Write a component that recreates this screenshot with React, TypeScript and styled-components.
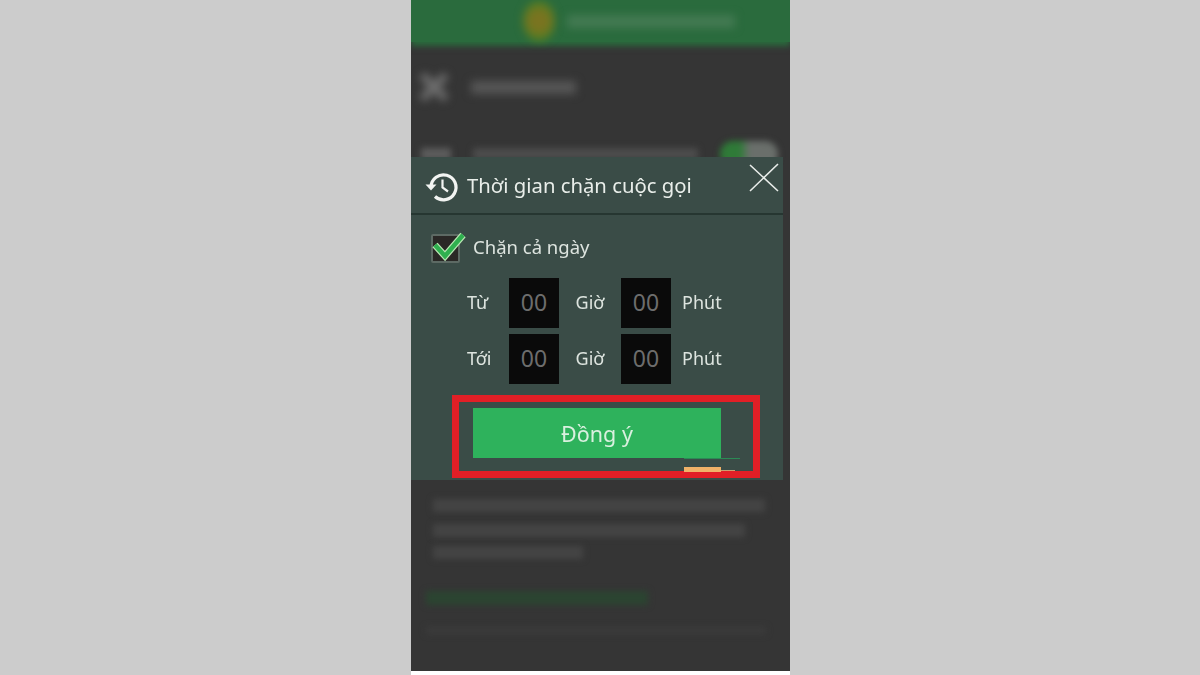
import React from "react";
import styled, { createGlobalStyle } from "styled-components";

const Global = createGlobalStyle`
  html, body { margin: 0; padding: 0; background: #cccccc; }
  body { width: 1200px; height: 675px; overflow: hidden; font-family: "Noto Sans", "Open Sans", sans-serif; }
`;
const Stage = styled.div`
  width: 1200px; height: 675px; display: flex; justify-content: center; padding-left: 1px; box-sizing: border-box;
`;
const Phone = styled.div`
  position: relative; width: 379px; height: 675px; background: #ffffff; overflow: hidden;
  display: flex; flex-direction: column;
`;
const Backdrop = styled.div`
  height: 671px; background: #353535; display: flex; flex-direction: column; overflow: hidden;
`;
const Header = styled.div`
  height: 42px; flex: none; background: #2a6b3d; display: flex; align-items: center; padding-left: 112px; gap: 12px;
  box-shadow: 0 4px 6px 0 #2a6b3d;
`;
const Smudge = styled.div<{ $w: number; $h?: number; $c?: string; $b?: number; $mt?: number; $ml?: number }>`
  width: ${p => p.$w}px; height: ${p => p.$h ?? 10}px; background: ${p => p.$c ?? "#555"}; flex: none;
  margin-top: ${p => p.$mt ?? 0}px; margin-left: ${p => p.$ml ?? 0}px;
  filter: blur(${p => p.$b ?? 3}px);
`;
const Coin = styled.div`
  width: 32px; height: 40px; border-radius: 50%; flex: none; filter: blur(4px);
  background: radial-gradient(circle, #7a7420 0 35%, #4f7f22 75%);
`;
const BackRow = styled.div<{ $top: number; $left?: number }>`
  display: flex; align-items: center; margin-top: ${p => p.$top}px; padding-left: ${p => p.$left ?? 10}px;
`;
const BlurX = styled.svg`
  width: 34px; height: 34px; flex: none; filter: blur(4px);
`;
const Toggle = styled.div`
  width: 58px; height: 26px; border-radius: 14px; margin-left: 22px; flex: none;
  background: linear-gradient(90deg, #2f7a38 0 35%, #6a6f6b 50%); filter: blur(3px);
`;
const BlurLines = styled.div`
  display: flex; flex-direction: column; padding-left: 22px; margin-top: 332px;
`;
const Dialog = styled.div`
  position: absolute; left: 0; top: 157px; width: 372px; height: 323px; background: #3a4c47; color: #e6ece8;
  display: flex; flex-direction: column;
`;
const TitleBar = styled.div`
  position: relative; height: 58px; flex: none; box-sizing: border-box; border-bottom: 2px solid #263631;
  display: flex; align-items: center; padding: 4px 0 0 13px; gap: 7px;
`;
const Title = styled.div`
  font-size: 20.3px; line-height: 28px; padding-bottom: 5px; color: #e9eeea; filter: blur(0.35px); white-space: nowrap;
`;
const Close = styled.svg`
  position: absolute; left: 337px; top: 6px; width: 32px; height: 30px;
`;
const CheckRow = styled.div`
  display: flex; align-items: center; gap: 13px; padding: 17px 0 0 20px; height: 32px;
`;
const CheckBox = styled.div`
  position: relative; width: 29px; height: 29px; box-sizing: border-box; background: #2a2826; border: 2px solid #5d6a64; border-radius: 2px;
`;
const CheckMark = styled.svg`
  position: absolute; left: -2px; top: -2px; width: 36px; height: 30px; overflow: visible;
`;
const CheckLabel = styled.div`
  font-size: 18.5px; line-height: 26px; padding-bottom: 3px; color: #dde4df; filter: blur(0.35px); white-space: nowrap;
`;
const TimeGrid = styled.div`
  display: grid; grid-template-columns: 42px 50px 62px 50px 1fr; row-gap: 6px; padding: 14px 0 0 56px;
  align-items: center;
`;
const TimeLabel = styled.div`
  font-size: 18px; line-height: 24px; padding-bottom: 2px; color: #dde4df; filter: blur(0.35px); text-align: center; white-space: nowrap;
`;
const TimeLeft = styled(TimeLabel)`
  text-align: left;
`;
const UnitLeft = styled(TimeLabel)`
  text-align: left; padding-left: 11px;
`;
const TimeBox = styled.div`
  width: 50px; height: 50px; box-sizing: border-box; padding-bottom: 2px; background: #0a0a0a; color: #6d6d6d; font-size: 23px;
  display: flex; align-items: center; justify-content: center;
`;
const RedFrame = styled.div`
  position: absolute; left: 41px; top: 238px; width: 308px; height: 83px; box-sizing: border-box; border: 7px solid #e11f26;
`;
const ConfirmButton = styled.div`
  position: absolute; left: 14px; top: 6px; width: 248px; height: 50px; background: #2eb25c; color: #d9f0df;
  font-size: 21.5px; display: flex; align-items: center; justify-content: center; filter: blur(0.3px); box-sizing: border-box;
`;
const Artifact = styled.div<{ $l: number; $t: number; $w: number; $h: number; $c: string }>`
  position: absolute; left: ${p => p.$l}px; top: ${p => p.$t}px; width: ${p => p.$w}px; height: ${p => p.$h}px; background: ${p => p.$c};
`;

const Row = ({ l, u, a, b }: { l: string; u: string; a: string; b: string }) => (
  <>
    <TimeLeft>{l}</TimeLeft>
    <TimeBox>{a}</TimeBox>
    <TimeLabel>{u}</TimeLabel>
    <TimeBox>{b}</TimeBox>
    <UnitLeft>Phút</UnitLeft>
  </>
);

export default function App() {
  return (
    <Stage>
      <Global />
      <Phone>
        <Backdrop>
          <Header>
            <Coin />
            <Smudge $w={168} $h={13} $c="#437a52" $b={4} />
          </Header>
          <BackRow $top={28} $left={6}>
            <BlurX viewBox="0 0 34 34" fill="none" stroke="#6e6e6e" strokeWidth="8">
              <path d="M5 5 29 29M29 5 5 29" />
            </BlurX>
            <Smudge $w={105} $h={13} $c="#565656" $b={4} $ml={20} />
          </BackRow>
          <BackRow $top={37}>
            <Smudge $w={30} $h={12} $c="#5c5c5c" />
            <Smudge $w={225} $h={12} $c="#4c4c4c" $ml={22} />
            <Toggle />
          </BackRow>
          <BlurLines>
            <Smudge $w={332} $h={13} $c="#444444" $b={3} />
            <Smudge $w={312} $h={13} $c="#444444" $b={3} $mt={12} />
            <Smudge $w={150} $h={13} $c="#444444" $b={3} $mt={9} />
            <Smudge $w={222} $h={14} $c="#2b4431" $b={3} $mt={32} $ml={-7} />
            <Smudge $w={340} $h={7} $c="#3b3b3b" $b={3} $mt={22} $ml={-7} />
          </BlurLines>
        </Backdrop>
        <Dialog>
          <TitleBar>
            <svg width="36" height="36" viewBox="0 0 36 36" fill="none" stroke="#f2f4f2" strokeWidth="3.2">
              <path d="M7 18a12.5 12.5 0 1 1 4 9.5" />
              <path d="M1.5 15.5 7 21.5l5.5-6z" fill="#f2f4f2" stroke="none" />
              <path d="M18.5 10.5v8l5.5 4" strokeWidth="2.2" />
            </svg>
            <Title>Thời gian chặn cuộc gọi</Title>
            <Close viewBox="0 0 32 30" fill="none" stroke="#e8ece9" strokeWidth="1.6">
              <path d="M2 2 30 28M30 1 2 28" />
            </Close>
          </TitleBar>
          <CheckRow>
            <CheckBox>
              <CheckMark viewBox="0 0 36 30" fill="none">
                <path d="M4 11 14 22 32 1" stroke="#b9e8b4" strokeWidth="7" />
                <path d="M4 11 14 22 32 1" stroke="#2fb04f" strokeWidth="4.5" />
              </CheckMark>
            </CheckBox>
            <CheckLabel>Chặn cả ngày</CheckLabel>
          </CheckRow>
          <TimeGrid>
            <Row l="Từ" u="Giờ" a="00" b="00" />
            <Row l="Tới" u="Giờ" a="00" b="00" />
          </TimeGrid>
          <RedFrame>
            <ConfirmButton>Đồng ý</ConfirmButton>
            <Artifact $l={225} $t={56} $w={56} $h={1} $c="#2b8a55" />
            <Artifact $l={225} $t={65} $w={37} $h={5} $c="#f0b268" />
            <Artifact $l={262} $t={68} $w={14} $h={1} $c="#c8a070" />
          </RedFrame>
        </Dialog>
      </Phone>
    </Stage>
  );
}
